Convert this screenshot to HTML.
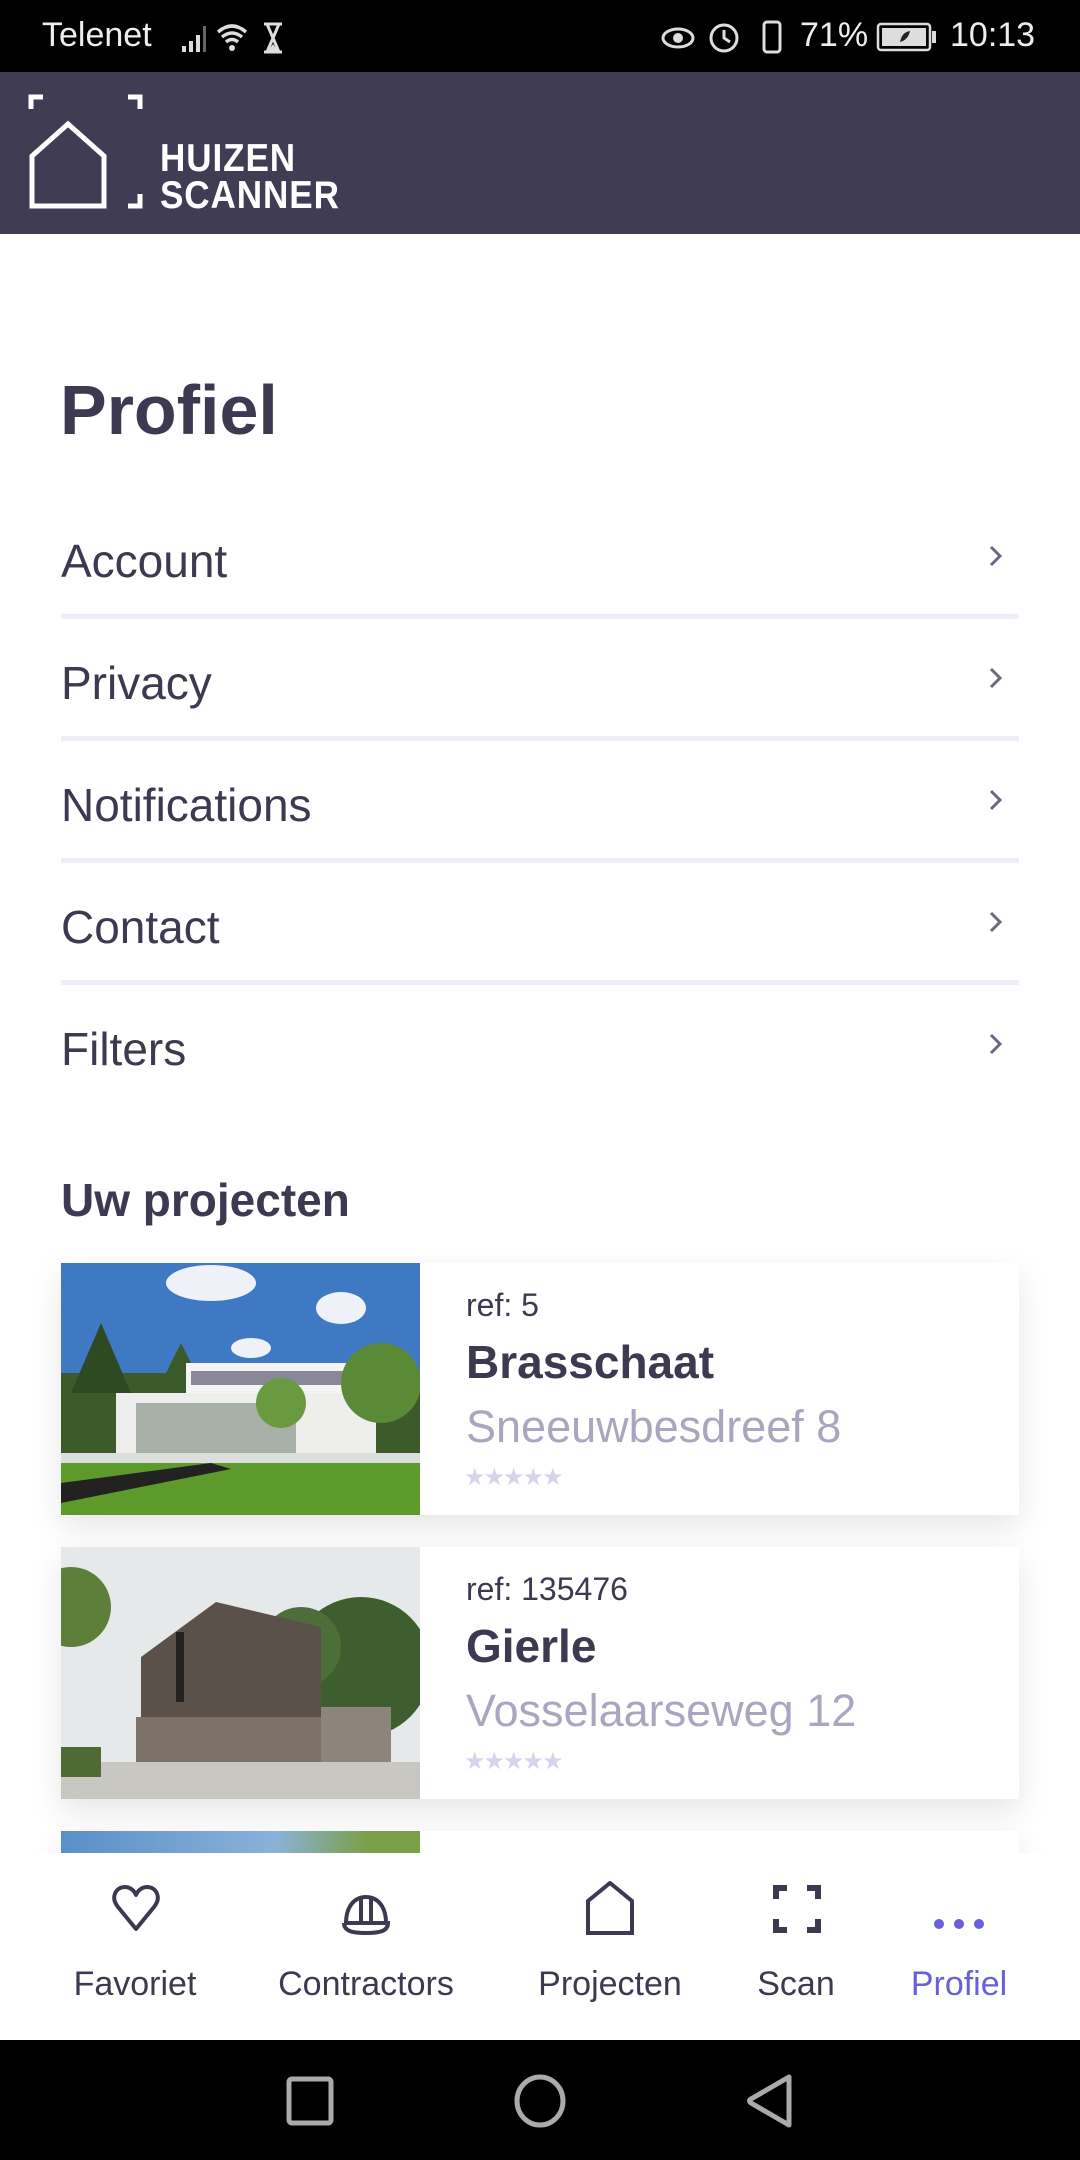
<!DOCTYPE html>
<html><head><meta charset="utf-8"><style>
*{margin:0;padding:0;box-sizing:border-box}
body{width:1080px;height:2160px;position:relative;overflow:hidden;background:#fff;font-family:"Liberation Sans",sans-serif;color:#3c3a50}
.abs{position:absolute}
.status{left:0;top:0;width:1080px;height:72px;background:#000;color:#eee;font-size:34px}
.header{left:0;top:72px;width:1080px;height:162px;background:#403c54}
.menu{left:61px;width:958px;font-size:46px;color:#3c3a50}
.div{left:61px;width:958px;height:5px;background:#efeef6}
.chev{left:985px;width:22px;height:22px}
.card{left:61px;width:958px;height:252px;background:#fff;box-shadow:0 12px 30px rgba(0,0,0,0.10)}
.img{position:absolute;left:0;top:0;width:359px;height:100%;overflow:hidden}
.ref{position:absolute;left:405px;font-size:32px;color:#3c3a50}
.city{position:absolute;left:405px;font-size:46px;font-weight:bold;color:#3c3a50}
.addr{position:absolute;left:405px;font-size:45px;color:#a9a6c0}
.stars{position:absolute;left:403px;font-size:24px;color:#d6d4ea;letter-spacing:-2px}
.nav{left:0;top:1853px;width:1080px;height:187px;background:#fff}
.lbl{position:absolute;top:112px;font-size:34px;color:#3c3a50;transform:translateX(-50%);white-space:nowrap}
.sys{left:0;top:2040px;width:1080px;height:120px;background:#000}
</style></head><body>
<div class="abs status">
 <div class="abs" style="left:42px;top:16px">Telenet</div>
 <svg class="abs" style="left:180px;top:20px" width="130" height="36" viewBox="0 0 130 36">
  <rect x="2" y="26" width="4" height="6" fill="#ddd"/><rect x="9" y="21" width="4" height="11" fill="#ddd"/><rect x="16" y="15" width="4" height="17" fill="#ddd"/><rect x="23" y="6" width="3" height="26" fill="#666"/>
  <path d="M38 12 Q52 0 66 12 M42 17 Q52 9 62 17 M46 22 Q52 17 58 22" stroke="#ddd" stroke-width="3.5" fill="none"/><circle cx="52" cy="28" r="3" fill="#ddd"/>
  <path d="M84 4 H102 M84 32 H102 M87 4 L93 18 L87 32 M99 4 L93 18 L99 32" stroke="#ddd" stroke-width="3" fill="none"/><path d="M88 31 L93 24 L98 31Z" fill="#ddd"/>
 </svg>
 <svg class="abs" style="left:658px;top:18px" width="220" height="38" viewBox="0 0 220 38">
  <ellipse cx="20" cy="20" rx="15" ry="9" stroke="#ddd" stroke-width="3" fill="none"/><circle cx="20" cy="20" r="5" fill="#ddd"/>
  <circle cx="66" cy="20" r="13" stroke="#ddd" stroke-width="3" fill="none"/><path d="M66 12 V20 L72 24" stroke="#ddd" stroke-width="3" fill="none"/>
  <rect x="106" y="4" width="16" height="30" rx="3" stroke="#ddd" stroke-width="3" fill="none"/>
 </svg>
 <div class="abs" style="left:800px;top:16px">71%</div>
 <svg class="abs" style="left:876px;top:22px" width="62" height="30"><rect x="2" y="2" width="52" height="26" rx="3" stroke="#ddd" stroke-width="2.5" fill="none"/><rect x="6" y="6" width="44" height="18" fill="#ddd"/><rect x="56" y="9" width="4" height="12" fill="#ddd"/><path d="M24 20 Q26 10 34 9 Q32 18 24 20Z" fill="#222"/></svg>
 <div class="abs" style="left:950px;top:16px">10:13</div>
</div>
<div class="abs header">
 <svg class="abs" style="left:28px;top:22px" width="120" height="120" viewBox="0 0 120 120">
  <path d="M3 15 V3 H15 M100 3 H112 V15 M112 100 V112 H100" stroke="#fff" stroke-width="5" fill="none"/>
  <path d="M4 112 V62 L40 30 L76 62 V112 Z" stroke="#fff" stroke-width="5" fill="none"/>
 </svg>
 <div class="abs" style="left:160px;top:68px;font-size:39px;font-weight:bold;color:#fff;line-height:37px;transform:scaleX(0.9);transform-origin:left top;letter-spacing:1px">HUIZEN<br>SCANNER</div>
</div>
<div class="abs" style="left:60px;top:370px;font-size:70px;font-weight:bold;color:#3c3a50">Profiel</div>

<div class="abs menu" style="top:534px">Account</div>
<div class="abs div" style="top:614px"></div>
<div class="abs menu" style="top:656px">Privacy</div>
<div class="abs div" style="top:736px"></div>
<div class="abs menu" style="top:778px">Notifications</div>
<div class="abs div" style="top:858px"></div>
<div class="abs menu" style="top:900px">Contact</div>
<div class="abs div" style="top:980px"></div>
<div class="abs menu" style="top:1022px">Filters</div>

<svg class="abs chev" style="top:545px" viewBox="0 0 22 22"><path d="M6 2 L15 11 L6 20" stroke="#6b6880" stroke-width="3" fill="none"/></svg>
<svg class="abs chev" style="top:667px" viewBox="0 0 22 22"><path d="M6 2 L15 11 L6 20" stroke="#6b6880" stroke-width="3" fill="none"/></svg>
<svg class="abs chev" style="top:789px" viewBox="0 0 22 22"><path d="M6 2 L15 11 L6 20" stroke="#6b6880" stroke-width="3" fill="none"/></svg>
<svg class="abs chev" style="top:911px" viewBox="0 0 22 22"><path d="M6 2 L15 11 L6 20" stroke="#6b6880" stroke-width="3" fill="none"/></svg>
<svg class="abs chev" style="top:1033px" viewBox="0 0 22 22"><path d="M6 2 L15 11 L6 20" stroke="#6b6880" stroke-width="3" fill="none"/></svg>

<div class="abs" style="left:61px;top:1173px;font-size:46px;font-weight:bold;color:#3c3a50">Uw projecten</div>

<div class="abs card" style="top:1263px">
 <div class="img">
  <svg width="359" height="252" viewBox="0 0 359 252">
   <rect width="359" height="252" fill="#3f79c4"/>
   <ellipse cx="150" cy="20" rx="45" ry="18" fill="#eef2f8"/><ellipse cx="280" cy="45" rx="25" ry="16" fill="#eef2f8"/><ellipse cx="190" cy="85" rx="20" ry="10" fill="#eef2f8"/>
   <rect y="110" width="359" height="142" fill="#3c5a2a"/>
   <path d="M40 60 L70 130 L10 130Z" fill="#2d4a22"/><path d="M120 80 L150 140 L90 140Z" fill="#3b5a2a"/>
   <rect x="125" y="100" width="190" height="35" fill="#f4f4f2"/><rect x="130" y="108" width="170" height="14" fill="#889"/>
   <rect x="55" y="130" width="260" height="65" fill="#eeeeec"/><rect x="75" y="140" width="160" height="50" fill="#a8b0a8"/>
   <circle cx="320" cy="120" r="40" fill="#5a8a36"/><circle cx="220" cy="140" r="25" fill="#6a9a40"/>
   <path d="M0 200 L200 190 L359 200 V252 H0Z" fill="#5d9a2c"/><path d="M0 220 L150 200 L170 206 L0 240Z" fill="#222"/>
   <rect x="0" y="190" width="359" height="10" fill="#ddd"/>
  </svg>
 </div>
 <div class="ref" style="top:24px">ref: 5</div>
 <div class="city" style="top:72px">Brasschaat</div>
 <div class="addr" style="top:138px">Sneeuwbesdreef 8</div>
 <div class="stars" style="top:200px">★★★★★</div>
</div>

<div class="abs card" style="top:1547px">
 <div class="img">
  <svg width="359" height="253" viewBox="0 0 359 253">
   <rect width="359" height="253" fill="#e6e9ea"/>
   <circle cx="10" cy="60" r="40" fill="#5d7f3a"/><circle cx="300" cy="120" r="70" fill="#3f5e30"/><circle cx="240" cy="100" r="40" fill="#4d6e38"/>
   <path d="M80 110 L155 55 L260 80 L260 170 L80 180Z" fill="#5a514a"/>
   <rect x="75" y="170" width="185" height="55" fill="#7c7268"/><rect x="260" y="160" width="70" height="60" fill="#8d857c"/>
   <rect x="115" y="85" width="8" height="70" fill="#222"/>
   <rect y="215" width="359" height="38" fill="#c9c7c2"/><rect y="200" width="40" height="30" fill="#4f6a34"/>
  </svg>
 </div>
 <div class="ref" style="top:24px">ref: 135476</div>
 <div class="city" style="top:72px">Gierle</div>
 <div class="addr" style="top:138px">Vosselaarseweg 12</div>
 <div class="stars" style="top:200px">★★★★★</div>
</div>

<div class="abs card" style="top:1831px;height:60px">
 <div class="img" style="background:linear-gradient(90deg,#5a8fc9,#8ab2d8 60%,#7aa04a 85%)"></div>
</div>

<div class="abs nav">
 <svg class="abs" style="left:110px;top:30px" width="52" height="52" viewBox="0 0 52 52"><path d="M26 46 L8 24 C0 14 6 4 15 4 C21 4 25 9 26 12 C27 9 31 4 37 4 C46 4 52 14 44 24 Z" stroke="#3c3a50" stroke-width="4" fill="none" stroke-linejoin="round"/></svg>
 <svg class="abs" style="left:340px;top:34px" width="52" height="50" viewBox="0 0 52 50"><path d="M6 36 C6 20 14 10 26 10 C38 10 46 20 46 36 Z M4 36 H48 C48 44 40 46 26 46 C12 46 4 44 4 36" stroke="#3c3a50" stroke-width="4" fill="none"/><path d="M21 12 V34 M31 12 V34" stroke="#3c3a50" stroke-width="4"/></svg>
 <svg class="abs" style="left:584px;top:28px" width="52" height="56" viewBox="0 0 52 56"><path d="M4 52 V20 L26 2 L48 20 V52 Z" stroke="#3c3a50" stroke-width="4" fill="none"/></svg>
 <svg class="abs" style="left:773px;top:32px" width="48" height="48" viewBox="0 0 48 48"><path d="M3 14 V3 H14 M34 3 H45 V14 M45 34 V45 H34 M14 45 H3 V34" stroke="#3c3a50" stroke-width="6" fill="none"/></svg>
 <svg class="abs" style="left:933px;top:64px" width="52" height="14"><circle cx="6" cy="7" r="5" fill="#6a5fd6"/><circle cx="26" cy="7" r="5" fill="#6a5fd6"/><circle cx="46" cy="7" r="5" fill="#6a5fd6"/></svg>
 <div class="lbl" style="left:135px">Favoriet</div>
 <div class="lbl" style="left:366px">Contractors</div>
 <div class="lbl" style="left:610px">Projecten</div>
 <div class="lbl" style="left:796px">Scan</div>
 <div class="lbl" style="left:959px;color:#6a5fd6">Profiel</div>
</div>

<div class="abs sys">
 <svg class="abs" style="left:285px;top:35px" width="50" height="52"><rect x="4" y="4" width="42" height="44" rx="3" stroke="#aaa" stroke-width="5" fill="none"/></svg>
 <svg class="abs" style="left:512px;top:33px" width="56" height="56"><ellipse cx="28" cy="28" rx="23" ry="24" stroke="#aaa" stroke-width="5" fill="none"/></svg>
 <svg class="abs" style="left:745px;top:33px" width="50" height="56"><path d="M44 4 V52 L6 30 Q3 28 6 26 Z" stroke="#aaa" stroke-width="5" fill="none" stroke-linejoin="round"/></svg>
</div>
</body></html>
